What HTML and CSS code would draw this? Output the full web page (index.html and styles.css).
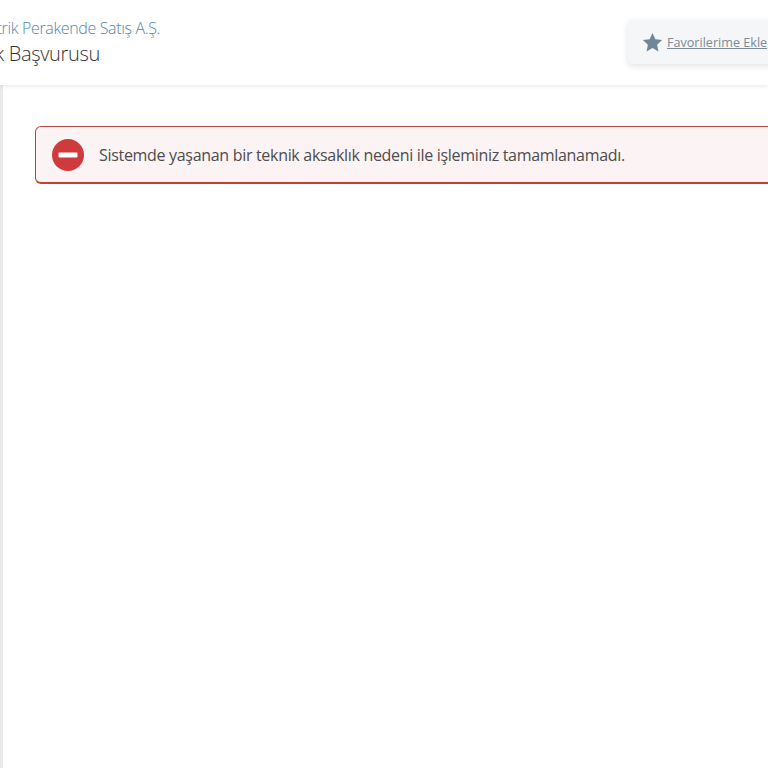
FILE: index.html
```html
<!DOCTYPE html>
<html lang="en">
<head>
    <meta charset="UTF-8">
    <meta name="viewport" content="width=device-width, initial-scale=1.0">
    <title>Abonelik Başvurusu</title>
    <link rel="stylesheet" href="styles.css">
</head>
<body>
    <header class="top-bar">
        <div class="page-title">
            <div class="company">Elektrik Perakende Satış A.Ş.</div>
            <div class="service">Abonelik Başvurusu</div>
        </div>
        <div class="fav-box">
            <svg class="star" viewBox="0 0 24 24" width="21" height="21">
                <path d="M12 1.2l3.3 7.1 7.7.9-5.7 5.3 1.5 7.7L12 18.4l-6.8 3.8 1.5-7.7L1 9.2l7.7-.9z"/>
            </svg>
            <a class="fav-link" href="#">Favorilerime Ekle</a>
        </div>
    </header>

    <main class="content">
        <div class="alert">
            <svg class="alert-icon" viewBox="0 0 32 32" width="32" height="32">
                <circle cx="16" cy="16" r="16" fill="#cf3a3c"/>
                <rect x="6.5" y="13.5" width="19" height="5" rx="1" fill="#fff"/>
            </svg>
            <p class="alert-text">Sistemde yaşanan bir teknik aksaklık nedeni ile işleminiz tamamlanamadı.</p>
        </div>
    </main>
</body>
</html>
```

FILE: styles.css
```css
body {
    font-family: "Open Sans", Arial, sans-serif;
    background-color: #fff;
    margin: 0;
    padding: 0;
    height: 768px;
    overflow: hidden;
    display: flex;
    flex-direction: column;
}

.top-bar {
    height: 85px;
    flex-shrink: 0;
    display: flex;
    align-items: center;
    justify-content: space-between;
    background-color: #fff;
    box-shadow: 0 1px 4px rgba(0, 0, 0, 0.1);
    position: relative;
}

.page-title {
    margin-left: -71px;
    white-space: nowrap;
    font-weight: 300;
}

.company {
    font-size: 16px;
    line-height: 22px;
    color: #5b83a8;
    letter-spacing: -0.35px;
    margin-left: 40px;
}

.service {
    font-size: 20px;
    line-height: 30px;
    letter-spacing: -0.3px;
    color: #333;
}

.fav-box {
    display: flex;
    align-items: center;
    gap: 4px;
    width: 150px;
    margin-right: -24px;
    height: 44px;
    margin-top: -1px;
    padding-left: 14px;
    background-color: #f5f6f8;
    border-radius: 4px;
    box-shadow: 0 2px 6px rgba(0, 0, 0, 0.12);
    white-space: nowrap;
}

.star { fill: #6f8799; flex-shrink: 0; }

.fav-link {
    font-size: 12.6px;
    color: #7d8b95;
}

.content {
    flex: 1;
    background-color: #fff;
    border-left: 3px solid #eaeaea;
    padding: 41px 0 0 32px;
}

.alert {
    display: flex;
    align-items: center;
    gap: 15px;
    height: 55px;
    width: 760px;
    padding-left: 16px;
    background-color: #fbf3f4;
    border: 1px solid #b0473f;
    border-bottom: 2px solid #c8402f;
    border-radius: 6px;
}

.alert-icon { flex-shrink: 0; }

.alert-text {
    margin: 0;
    font-size: 16px;
    letter-spacing: -0.31px;
    color: #4d4d4d;
    white-space: nowrap;
}
```
